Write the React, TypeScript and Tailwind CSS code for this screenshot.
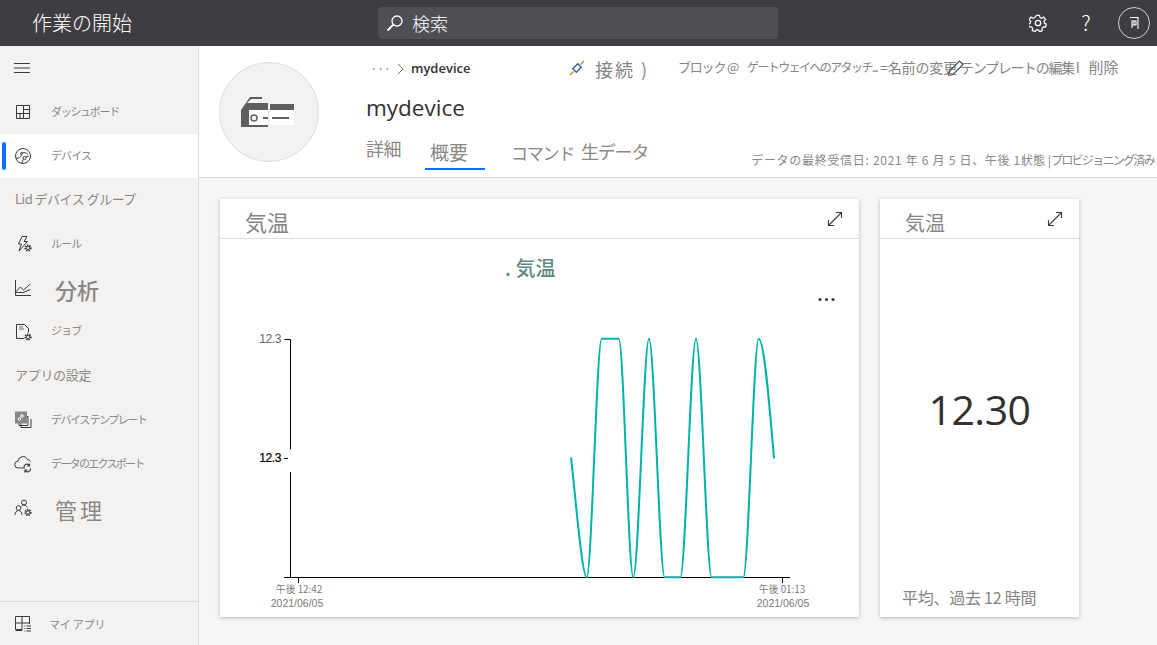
import React from 'react';

const jp = "font-['Noto_Sans_CJK_JP','Noto_Sans',sans-serif]";

const GearBadge = ({ cx, cy, r = 2.6 }: { cx: number; cy: number; r?: number }) => (
  <g>
    <circle cx={cx} cy={cy} r={r + 1.4} fill="#f3f2f1" stroke="none" />
    <circle cx={cx} cy={cy} r={r} fill="none" strokeWidth="2" strokeDasharray="1.4 0.8" />
    <circle cx={cx} cy={cy} r={r - 1} fill="none" strokeWidth="0.8" />
  </g>
);

const icons: Record<string, React.ReactNode> = {
  dashboard: (
    <>
      <path d="M2.5 2.5h13v13h-13z" />
      <path d="M9.5 2.5v13M9.5 6.5h6M9.5 10.5h6M2.5 10.5h7M6 10.5v5" />
    </>
  ),
  device: (
    <>
      <circle cx="9" cy="9" r="7.5" />
      <circle cx="10.5" cy="11" r="1.6" />
      <circle cx="7.5" cy="6.5" r="1" />
      <path d="M2 11c3 1 5-1 5.5-3.5M7.5 6.5c2-1.5 5-1 6.5 1M9 12.5c0 1.5-.5 2.500-1 3.500M12 10l3-1" />
    </>
  ),
  rule: (
    <>
      <path d="M8 1.500h5l-3 5h3.500L5 16l2.500-7H4.500z" />
      <GearBadge cx={14} cy={13} />
    </>
  ),
  analytics: (
    <>
      <path d="M1.500 1v15.500H17" />
      <path d="M1.500 13l5-5 3 3 7-6M1.500 13.500h3l4.500 0 7.500-3" />
    </>
  ),
  job: (
    <>
      <path d="M2.500 15.500V1.500h8l4 4v4M2.500 15.500h8" />
      <path d="M5 4h4M5 6h5" strokeWidth="0.7" />
      <GearBadge cx={14} cy={14} />
    </>
  ),
  template: (
    <>
      <path d="M5 5.500h9v9H5zM7 8v8.500h10V8" />
      <rect x="1.500" y="1" width="11" height="11" fill="#8a8886" stroke="#8a8886" />
      <circle cx="8" cy="5" r="1.300" stroke="#fff" />
      <circle cx="5.500" cy="8" r="1.300" stroke="#fff" />
    </>
  ),
  export: (
    <>
      <path d="M11 13H4.500a3.500 3.500 0 0 1-.5-7 5 5 0 0 1 9.500-1.500 3.500 3.500 0 0 1 3 2" />
      <path d="M10 12.500a3 3 0 0 1 5.500-2M16.500 13.500a3 3 0 0 1-5.500 2M15.500 8.500v2.500h-2.500M11 17.500V15h2.500" strokeWidth="1.200" />
    </>
  ),
  admin: (
    <>
      <circle cx="10" cy="3.500" r="2.500" />
      <circle cx="4.500" cy="9" r="2.300" />
      <path d="M1 16c0-2.500 1.500-4.500 3.500-4.500S8 13.500 8 16M7.500 7.500C8 6.800 9 6 10 6c1.500 0 2.700 1 3.300 2.500" />
      <GearBadge cx={14} cy={13.500} />
    </>
  ),
  apps: (
    <>
      <path d="M1.500 1.500h14v6.500h-14zM1.500 8v6.500h6.500V1.500M15.500 8v1" />
      <path d="M1.500 15.500h7M10.500 11h1M12.500 11h4.500M10.500 13.500h1M12.500 13.500h4.500M10.500 16h1M12.500 16h4.500" />
    </>
  ),
};

const NavIcon = ({ name }: { name: string }) => (
  <svg
    width="18"
    height="18"
    viewBox="0 0 18 18"
    fill="none"
    stroke="#3b3a39"
    strokeWidth="1"
    className="shrink-0"
  >
    {icons[name]}
  </svg>
);

type NavItem = {
  label: string;
  icon?: string;
  big?: boolean;
  active?: boolean;
  textClass?: string;
};

const navItems: NavItem[] = [
  { label: 'ダッシュボード', icon: 'dashboard', textClass: 'tracking-[-1.3px]' },
  { label: 'デバイス', icon: 'device', active: true, textClass: 'tracking-[-0.9px]' },
  { label: 'Lid デバイス グループ', textClass: 'tracking-[-0.5px]' },
  { label: 'ルール', icon: 'rule', textClass: 'tracking-[-0.9px]' },
  { label: '分析', icon: 'analytics', big: true, textClass: 'font-medium mb-[2px]' },
  { label: 'ジョブ', icon: 'job', textClass: 'tracking-[-0.9px] mb-[3px]' },
  { label: 'アプリの設定', textClass: 'tracking-[-0.3px]' },
  { label: 'デバイス テンプレート', icon: 'template', textClass: 'tracking-[-1.5px]' },
  { label: 'データのエクスポート', icon: 'export', textClass: 'tracking-[-1.7px]' },
  { label: '管理', icon: 'admin', big: true, textClass: 'tracking-[3px] mb-[3px]' },
];

const SidebarRow = ({ item }: { item: NavItem }) => (
  <div
    className={`relative flex h-11 items-center ${item.active ? 'bg-white' : ''} ${
      item.icon ? 'pl-[14px]' : 'pl-[15px]'
    }`}
  >
    {item.active && (
      <span className="absolute left-[2px] top-2 h-7 w-1 rounded-full bg-[#0f6cfd]" />
    )}
    {item.icon && <NavIcon name={item.icon} />}
    {item.icon ? (
      item.big ? (
        <span className={`ml-[23px] mt-1 text-[22px] leading-none text-[#8a8886] ${item.textClass}`}>
          {item.label}
        </span>
      ) : (
        <span className={`ml-[19px] mb-[2px] text-[11px] text-[#8a8886] ${item.textClass}`}>
          {item.label}
        </span>
      )
    ) : (
      <span className={`mb-[2px] text-[13px] text-[#8a8886] ${item.textClass}`}>{item.label}</span>
    )}
  </div>
);

const Sidebar = () => (
  <aside className="flex w-[199px] shrink-0 flex-col border-r border-[#dcdbda] bg-[#f3f2f1]">
    <div className="flex h-11 items-center pl-[14px]">
      <svg width="16" height="12" viewBox="0 0 16 12" stroke="#3b3a39" strokeWidth="1">
        <path d="M0 1.500h16M0 6h16M0 10.500h16" />
      </svg>
    </div>
    {navItems.map((item) => (
      <SidebarRow key={item.label} item={item} />
    ))}
    <div className="flex-1" />
    <div className="flex h-11 items-center border-t border-[#dcdbda] pl-[14px]">
      <NavIcon name="apps" />
      <span className="ml-[17px] pt-[1px] text-[11px] tracking-[-0.2px] text-[#8a8886]">マイ アプリ</span>
    </div>
  </aside>
);

const TopBar = () => (
  <header className="flex h-[46px] shrink-0 items-center bg-[#3e3d42] pl-8 text-white">
    <div className="w-[346px] text-[20px] font-light">作業の開始</div>
    <div className="flex h-8 w-[400px] items-center rounded-sm bg-[#504f54] pl-2">
      <svg width="18" height="18" viewBox="0 0 18 18" fill="none" stroke="#fff" strokeWidth="1.300">
        <circle cx="11" cy="7" r="5" />
        <path d="M7.300 10.700L1.500 16.500" strokeWidth="1.800" />
      </svg>
      <span className="ml-2 text-[18px] font-light">検索</span>
    </div>
    <div className="ml-auto flex items-center">
      <svg width="18" height="18" viewBox="0 0 24 24" fill="none" stroke="#f4f7ff" strokeWidth="1.700">
        <circle cx="12" cy="12" r="3.600" />
        <path d="M10 1.800h4l.7 3 2.200 1 2.700-1.600 2.500 3-2 2.300.4 2.500 2.500 1.500-1 3.800-3-.1-1.700 1.900.5 3-3.600 1.500-1.800-2.500h-2.600l-1.800 2.500-3.600-1.500.5-3-1.700-1.900-3 .1-1-3.800 2.500-1.500.4-2.500-2-2.300 2.500-3 2.700 1.600 2.200-1z" />
      </svg>
      <span className="ml-[30px] w-[18px] text-center text-[21px] font-light">?</span>
      <div className="ml-[23px] mr-[7px] flex h-8 w-8 items-center justify-center rounded-full border border-[#cfcfcf]">
        <svg width="10" height="14" viewBox="0 0 10 14" fill="none" stroke="#fff" strokeWidth="1.100">
          <path d="M1 1.500h8V13M3 5h4v4H3zM3 9v3M5 5v4" />
        </svg>
      </div>
    </div>
  </header>
);

const DeviceAvatar = () => (
  <div className="flex h-[100px] w-[100px] shrink-0 items-center justify-center rounded-full border border-[#dedddc] bg-[#f3f2f1]">
    <svg width="54" height="32" viewBox="0 0 54 32" className="mr-[5px]">
      <path d="M1 31V14L10 1h12v2H11L7 7h21v24z" fill="#605e5c" />
      <rect x="9" y="14" width="19" height="15" fill="#fff" />
      <rect x="30" y="8" width="24" height="6" fill="#605e5c" />
      <rect x="30" y="14" width="24" height="15" fill="#fff" />
      <circle cx="14" cy="22" r="3" fill="#fff" stroke="#605e5c" strokeWidth="1.500" />
      <path d="M23 22h5M32 22h17" stroke="#605e5c" strokeWidth="2" />
    </svg>
  </div>
);

const DeviceHeader = () => (
  <div className="flex h-[132px] shrink-0 border-b border-[#dcdbda] bg-white">
    <div className="ml-5 mt-4">
      <DeviceAvatar />
    </div>
    <div className="ml-[47px] min-w-0 flex-1 overflow-hidden">
      <div className="flex h-[46px] items-center whitespace-nowrap pl-[4px]">
        <span className="w-[27px] text-[13px] tracking-[-0.4px] text-[#8a8886]">···</span>
        <svg width="7" height="12" viewBox="0 0 7 12" fill="none" stroke="#605e5c" strokeWidth="0.900">
          <path d="M1 1l5 5-5 5" />
        </svg>
        <span className="ml-[7px] w-[158px] font-['Open_Sans'] text-[13px] font-semibold text-[#323130]">
          mydevice
        </span>
        <svg width="16" height="16" viewBox="0 0 16 16" fill="none" stroke="#3b5f91" strokeWidth="1.300" className="mb-[2px]">
          <path d="M1 15l3.500-3.500M15 1l-3.500 3.500" stroke="#e07a2f" />
          <rect x="4.500" y="5.500" width="7" height="5" transform="rotate(-45 8 8)" strokeWidth="1.400" />
        </svg>
        <span className="ml-[10px] w-[83px] text-[18px] tracking-[2px] text-[#858585]">接続 )</span>
        <span className="mb-1 w-[69px] text-[13px] tracking-[-1.2px] text-[#858585]">ブロック @</span>
        <span className="mb-1 w-[133px] text-[12px] tracking-[-1.6px] text-[#858585]">
          ゲートウェイへのアタッチ...
        </span>
        <span className="relative mb-1 w-[80px] text-[14px] tracking-[-0.1px] text-[#858585]">
          =名前の変更
          <svg
            width="18"
            height="18"
            viewBox="0 0 18 18"
            fill="none"
            stroke="#4b4a6a"
            strokeWidth="1.200"
            className="absolute -right-[5px] top-[2px]"
          >
            <path d="M1.500 16.500l1-4.500L12.500 2l3.500 3.500-10 10z" />
            <path d="M1.500 16.500l2.500-.7" stroke="#e0a030" />
          </svg>
        </span>
        <span className="mb-1 text-[14px] tracking-[-1.3px] text-[#858585]">テンプレートの編集 I</span>
        <span className="mb-1 ml-[10px] text-[15px] text-[#858585]">削除</span>
      </div>
      <div className="font-['Open_Sans'] text-[22.5px] leading-[32px] text-[#323130]">mydevice</div>
      <div className="mt-[2px] flex items-start whitespace-nowrap text-[#8a8886]">
        <span className="w-[59px] shrink-0 pt-[8px] text-[18px] leading-[28px] tracking-[-0.5px]">詳細</span>
        <span className="flex h-[44px] w-[60px] shrink-0 justify-start border-b-2 border-[#0f6cfd] pl-[5px] pt-[11px] text-[19px] leading-[29px]">
          概要
        </span>
        <span className="ml-[26px] w-[70px] shrink-0 pt-[12px] text-[17px] leading-[30px] tracking-[-1.2px]">コマンド</span>
        <span className="shrink-0 pt-[11px] text-[18px] leading-[29px] tracking-[-1.2px]">生データ</span>
        <span className="ml-[103px] shrink-0 pt-[24px] text-[12px] leading-[20px] tracking-[0.7px]">
          データの最終受信日: 2021 年 6 月 5 日、午後 1:
          <span className="-ml-[4px] tracking-normal">状態 |</span>
          <span className="tracking-[-1.7px]">プロビジョニング済み</span>
        </span>
      </div>
    </div>
  </div>
);

const ExpandIcon = () => (
  <svg width="16" height="16" viewBox="0 0 16 16" fill="none" stroke="#3b3a39" strokeWidth="1.100">
    <path d="M1.500 14.500L14.500 1.500M9 1.500h5.500V7M1.500 9v5.500H7" />
  </svg>
);

// Chart coordinates are local to the card body (page x - 220, page y - 239)
const curve =
  'M351 218.300C356 262 362 338.300 366.700 338.300C371.700 338.300 376.700 99.700 381.700 99.700L398.700 99.700C403.700 99.700 408.300 338.300 413.300 338.300C418.500 338.300 423.800 99.700 429 99.700C434.200 99.700 439.500 338.300 444.700 338.300L460.300 338.300C465.500 338.300 470.800 99.700 476 99.700C481.200 99.700 486.500 338.300 491.700 338.300L523.300 338.300C528.400 338.300 533.600 99.700 538.700 99.700C544 99.700 549 160 554 219.300';

const TemperatureChart = () => (
  <svg width="638" height="378" viewBox="0 0 638 378" className="block" fontFamily="'Noto Sans CJK JP', sans-serif">
    <text x="285" y="37" fontSize="20" fontWeight="500" fill="#5f8a85">
      . 気温
    </text>
    <g fill="#333">
      <circle cx="600" cy="60.500" r="1.500" />
      <circle cx="606.500" cy="60.500" r="1.500" />
      <circle cx="613" cy="60.500" r="1.500" />
    </g>
    <path
      d="M64.500 100.500h6v110M70.500 233v105M64 338.500h506M78.500 338v6M562.500 338v6M64 219.500h4"
      fill="none"
      stroke="#000"
      strokeWidth="1"
    />
    <path d={curve} fill="none" stroke="#00b4a6" strokeWidth="2" />
    <g fontFamily="'Liberation Sans', sans-serif" fontSize="12" textAnchor="end">
      <text x="61" y="104" fill="#666" letterSpacing="-0.4">
        12.3
      </text>
      <text x="61" y="223" fill="#000" fontWeight="500" stroke="#000" strokeWidth="0.2" letterSpacing="-0.4">
        12.3
      </text>
    </g>
    <g fill="#7a7a7a" textAnchor="middle" fontSize="10">
      <text x="79" y="354" fontSize="9.800">
        午後 12:42
      </text>
      <text x="77" y="368" fontSize="10.500" fontFamily="'Liberation Sans', sans-serif">
        2021/06/05
      </text>
      <text x="562" y="354" fontSize="9.800">
        午後 01:13
      </text>
      <text x="563" y="368" fontSize="10.500" fontFamily="'Liberation Sans', sans-serif">
        2021/06/05
      </text>
    </g>
  </svg>
);

const CardHeader = ({ size, textClass }: { size: string; textClass: string }) => (
  <div className="flex h-10 items-center justify-between border-b border-[#dedede] pl-[25px] pr-4">
    <span className={`${size} ${textClass} leading-none text-[#858585]`}>気温</span>
    <ExpandIcon />
  </div>
);

export default function App() {
  return (
    <div className={`flex h-[645px] w-[1157px] flex-col overflow-hidden ${jp}`}>
      <TopBar />
      <div className="flex min-h-0 flex-1">
        <Sidebar />
        <main className="flex min-w-0 flex-1 flex-col bg-[#f6f6f6]">
          <DeviceHeader />
          <div className="flex items-start gap-[21px] pl-[21px] pt-[21px]">
            <section className="h-[418px] w-[639px] bg-white shadow-[0_1px_4px_rgba(0,0,0,0.25)]">
              <CardHeader size="text-[22px]" textClass="pt-1" />
              <TemperatureChart />
            </section>
            <section className="flex h-[418px] w-[199px] flex-col bg-white shadow-[0_1px_4px_rgba(0,0,0,0.25)]">
              <CardHeader size="text-[20px]" textClass="pt-2" />
              <div className="flex flex-1 items-center justify-center pb-[4px] font-['Open_Sans'] text-[41px] font-normal tracking-[-0.5px] text-[#323130]">
                12.30
              </div>
              <div className="pb-2 pl-[22px] text-[16px] leading-6 tracking-[-0.25px] text-[#858585]">
                平均、過去 12 時間
              </div>
            </section>
          </div>
        </main>
      </div>
    </div>
  );
}
